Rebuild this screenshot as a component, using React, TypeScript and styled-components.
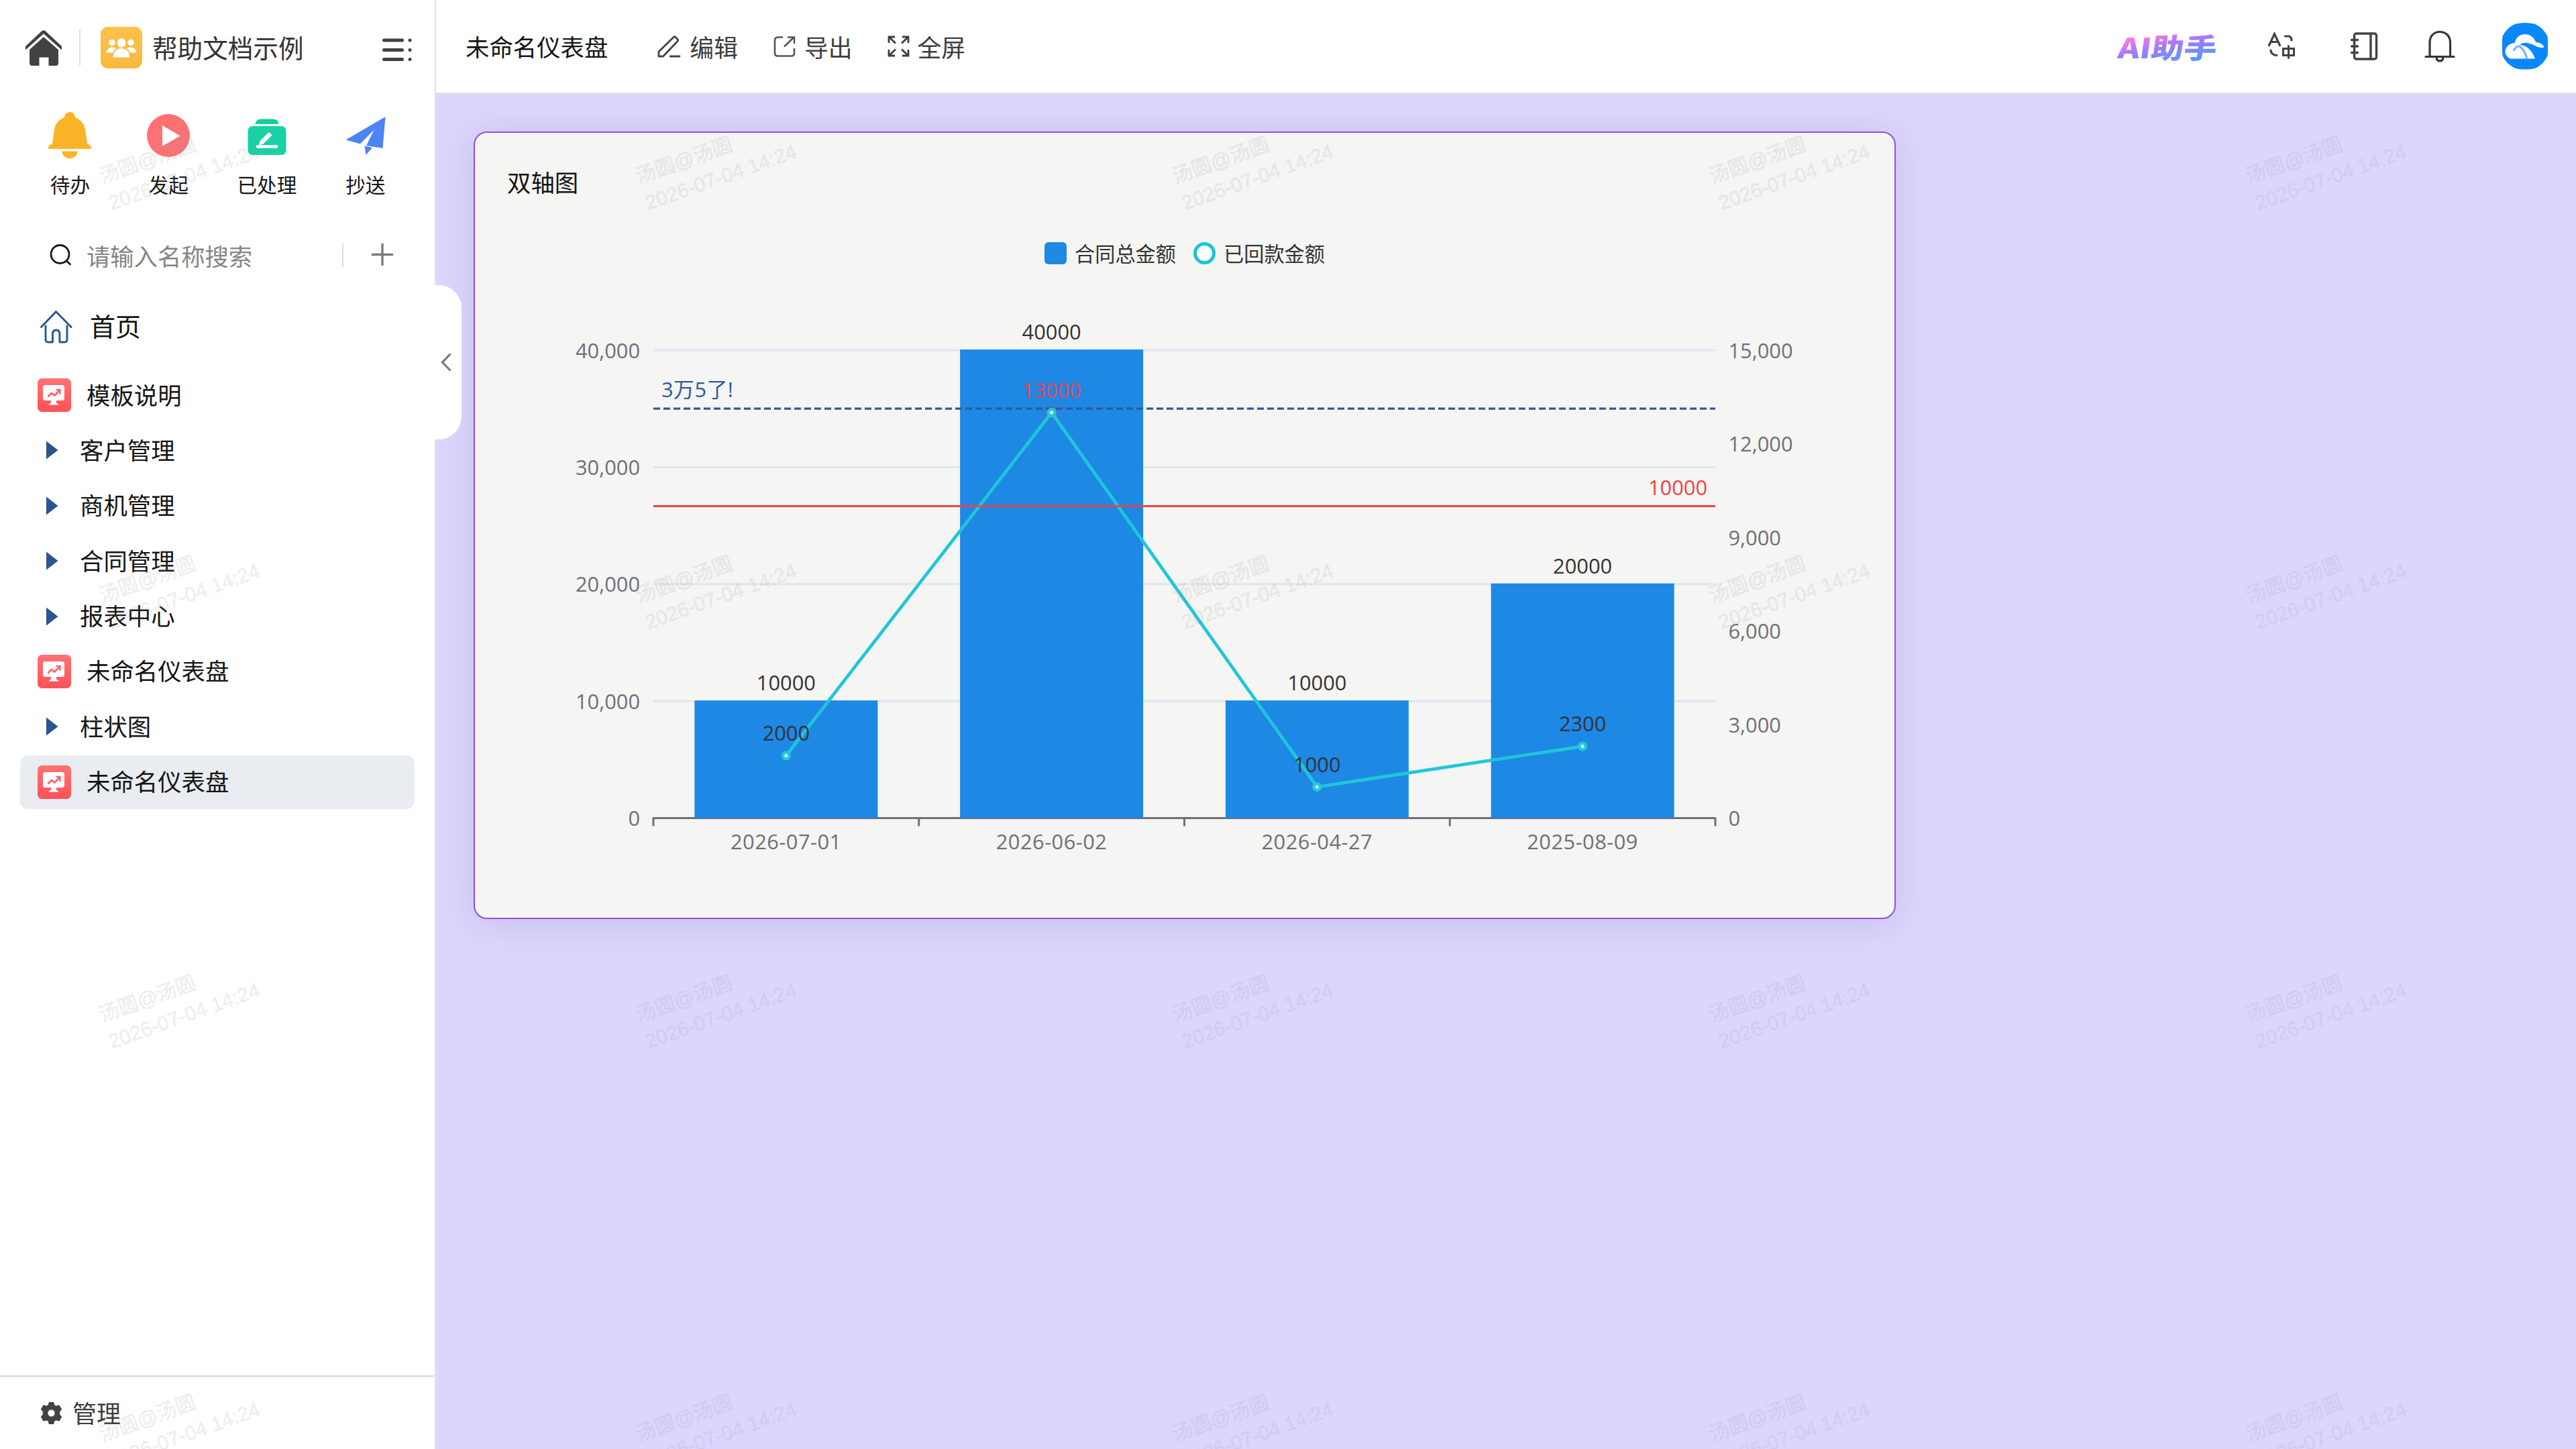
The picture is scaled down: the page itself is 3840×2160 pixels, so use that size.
import React from "react";
import styled, { createGlobalStyle } from "styled-components";

const CJK = `"Noto Sans CJK SC", "Noto Sans", sans-serif`;
const LATIN = `"Open Sans", "Noto Sans CJK SC", sans-serif`;

const GlobalStyle = createGlobalStyle`
  * { box-sizing: border-box; }
  html, body { margin: 0; padding: 0; }
  body { background: #dcd6ff; font-family: ${CJK}; color: #141414; overflow: hidden; }
  svg { display: block; flex: none; }
`;

const Page = styled.div`
  position: relative;
  display: flex;
  width: 3840px;
  height: 2160px;
  overflow: hidden;
  background: #dcd6ff;
`;

/* ---------- sidebar ---------- */

const Sidebar = styled.aside`
  flex: none;
  display: flex;
  flex-direction: column;
  width: 650px;
  height: 100%;
  background: #fff;
  border-right: 2px solid #e2e2e6;
`;

const SideHead = styled.header`
  display: flex;
  align-items: center;
  height: 142px;
  padding: 0 34px 0 38px;
`;

const Divider = styled.i<{ $h: number; $color?: string }>`
  flex: none;
  width: 2px;
  height: ${(p) => p.$h}px;
  background: ${(p) => p.$color ?? "#dedede"};
`;

const HeadDivider = styled(Divider)`
  margin: 0 30px 0 26px;
`;

const AppBadge = styled.span`
  display: flex;
  align-items: center;
  justify-content: center;
  width: 62px;
  height: 62px;
  border-radius: 11px;
  background: linear-gradient(#fec14a, #f7b840);
`;

const AppName = styled.span`
  margin: -3px 0 0 15px;
  font-size: 37.6px;
  line-height: 50px;
  color: #333;
  white-space: nowrap;
`;

const MenuButton = styled.span`
  margin: 8px 0 0 auto;
`;

const QuickActions = styled.nav`
  display: grid;
  grid-template-columns: repeat(4, 146.8px);
  height: 198px;
  padding: 23px 0 0 31px;
`;

const QuickAction = styled.a`
  display: flex;
  flex-direction: column;
  align-items: center;
`;

const QuickLabel = styled.span`
  margin-top: 16px;
  font-size: 29.6px;
  line-height: 40px;
  white-space: nowrap;
`;

const SearchRow = styled.div`
  display: flex;
  align-items: center;
  height: 80px;
  padding: 0 61px 0 74px;
`;

const Placeholder = styled.span`
  flex: 1;
  margin: 2px 0 0 22px;
  font-size: 35.3px;
  line-height: 50px;
  color: #858585;
  white-space: nowrap;
`;

const PlusSlot = styled.span`
  margin-left: 41px;
`;

const HomeRow = styled.a`
  display: flex;
  align-items: center;
  height: 80px;
  margin-top: 27px;
  padding-left: 60px;
  gap: 26px;
  font-size: 38px;
  line-height: 50px;
`;

const Tree = styled.ul`
  display: flex;
  flex-direction: column;
  gap: 2.4px;
  margin: 22px 30px 0;
  padding: 0;
  list-style: none;
`;

const TreeRow = styled.li<{ $folder?: boolean; $active?: boolean }>`
  display: flex;
  align-items: center;
  gap: ${(p) => (p.$folder ? 32 : 22)}px;
  height: 80px;
  padding-left: ${(p) => (p.$folder ? 39 : 26)}px;
  border-radius: 12px;
  background: ${(p) => (p.$active ? "#e9edf2" : "transparent")};
  font-size: 35.4px;
  line-height: 50px;
  white-space: nowrap;
`;

const RowText = styled.span<{ $lift: number }>`
  margin-top: ${(p) => -p.$lift}px;
`;

const SideFoot = styled.footer`
  display: flex;
  align-items: center;
  gap: 15px;
  height: 110px;
  margin-top: auto;
  padding-left: 60px;
  border-top: 3px solid #e0e0e0;
  font-size: 36px;
  line-height: 50px;
  color: #3c3c3c;
`;

/* Tab that hangs over the edge of the workspace and folds the sidebar */
const CollapseTab = styled.button`
  position: absolute;
  left: 647px;
  top: 425px;
  display: flex;
  align-items: center;
  width: 41px;
  height: 230px;
  padding: 0 0 0 9px;
  border: 0;
  border-radius: 0 34px 34px 0;
  background: #fff;
`;

/* ---------- workspace ---------- */

const Workspace = styled.div`
  flex: 1;
  display: flex;
  flex-direction: column;
  min-width: 0;
`;

const TopBar = styled.header`
  display: flex;
  align-items: center;
  flex: none;
  height: 140px;
  padding: 0 42px 0 44px;
  border-bottom: 2px solid #e2e2e6;
  background: #fff;
`;

const PageTitle = styled.h1`
  margin: 0 74px 0 0;
  font-size: 35.4px;
  font-weight: 400;
  line-height: 50px;
  white-space: nowrap;
`;

const ToolButton = styled.span<{ $after: number; $gap: number }>`
  display: flex;
  align-items: center;
  gap: ${(p) => p.$gap}px;
  margin-right: ${(p) => p.$after}px;
  font-size: 35.8px;
  line-height: 50px;
  color: #3d3d3d;
  white-space: nowrap;
`;

const TopRight = styled.div`
  display: flex;
  align-items: center;
  margin-left: auto;
`;

const Assistant = styled.span`
  width: 127px;
  margin-right: 95px;
  font-size: 41.5px;
  font-weight: 900;
  line-height: 54px;
  white-space: nowrap;
  transform: scaleX(1.18) skewX(-7deg);
  transform-origin: 0 50%;
  background: linear-gradient(165deg, #ff77dc 22%, #a07bff 48%, #5f95ff 80%);
  background-clip: text;
  -webkit-background-clip: text;
  color: transparent;
`;

const IconSlot = styled.span<{ $after: number }>`
  margin-right: ${(p) => p.$after}px;
`;

const Canvas = styled.main`
  flex: 1;
  padding: 56px;
`;

const Card = styled.section`
  display: flex;
  flex-direction: column;
  width: 2120px;
  height: 1174px;
  border: 2px solid #914fe3;
  border-radius: 20px;
  background: #f5f5f3;
  box-shadow: 0 6px 54px rgba(0, 0, 0, 0.11);
`;

const CardTitle = styled.h2`
  margin: 48px 0 0 48px;
  font-size: 35.4px;
  font-weight: 400;
  line-height: 50px;
`;

const Legend = styled.div`
  display: flex;
  justify-content: center;
  gap: 26px;
  height: 40px;
  margin: 61px 0 43px;
`;

const LegendItem = styled.span`
  display: flex;
  align-items: center;
  gap: 12px;
  font-size: 30.2px;
  line-height: 40px;
  color: #333;
`;

const Swatch = styled.i<{ $line?: boolean }>`
  width: 33px;
  height: 33px;
  border-radius: ${(p) => (p.$line ? "50%" : "6px")};
  border: ${(p) => (p.$line ? "5px solid #17c4d8" : "0")};
  background: ${(p) => (p.$line ? "#fff" : "#1e88e5")};
`;

const ChartSvg = styled.svg`
  font-family: ${LATIN};
  font-size: 30.8px;
`;

const DateLabel = styled.text`
  letter-spacing: 0.5px;
`;

/* ---------- watermark ---------- */

const WatermarkLayer = styled.div`
  position: absolute;
  left: 0;
  top: 140px;
  display: grid;
  grid-template-columns: repeat(5, 800px);
  grid-auto-rows: 625px;
  pointer-events: none;
`;

const Mark = styled.div`
  display: flex;
  padding: 62px 0 0 149px;
`;

const MarkText = styled.div`
  width: 240px;
  height: 84px;
  font: 30px/42px "Liberation Sans", "Noto Sans CJK SC", sans-serif;
  color: rgba(150, 150, 150, 0.15);
  -webkit-text-stroke: 1px rgba(150, 150, 150, 0.1);
  white-space: pre;
  transform: rotate(-19.5deg);
`;

/* ---------- icons ---------- */

const HouseSolid = () => (
  <svg width="54" height="54" viewBox="0 0 54 54">
    <path d="M0 25 24 2.500a4.500 4.500 0 0 1 6 0L54 25v6.500L27 6.500 0 31.500z" fill="#424242" />
    <path d="M6 30 27 11l22 19v20a4 4 0 0 1-4 4H34.500V41.500H20.500V54H10a4 4 0 0 1-4-4z" fill="#424242" />
    <path d="M0 32.500 27 8.500 54 32.500" fill="none" stroke="#fff" strokeWidth="3" />
  </svg>
);

const People = () => (
  <svg width="46" height="29" viewBox="0 0 46 29" fill="#fff">
    <circle cx="9" cy="6.500" r="4.800" />
    <circle cx="37" cy="6.500" r="4.800" />
    <ellipse cx="23" cy="7" rx="6.300" ry="6.800" />
    <path d="M.5 21.500c.5-5 4-8 8.500-8 2.500 0 4.500.5 6 2-2.500 1.500-4 3.500-4.500 6z" />
    <path d="M45.500 21.500c-.5-5-4-8-8.500-8-2.500 0-4.500.5-6 2 2.500 1.500 4 3.500 4.500 6z" />
    <path d="M10.500 28.500c.5-8.500 5-13.500 12.500-13.500s12 5 12.500 13.500z" />
  </svg>
);

const MenuIcon = () => (
  <svg width="44" height="42" viewBox="0 0 44 42" stroke="#424242" strokeWidth="5" strokeLinecap="round">
    <path d="M2.500 6h27M2.500 20.500h27M2.500 34.500h27M41 6h.1M41 20.500h.1M41 34.500h.1" />
  </svg>
);

const BellSolid = () => (
  <svg width="72" height="74" viewBox="0 0 72 74" fill="#fbb42a">
    <path d="M28 10a8 8 0 0 1 16 0c9 3 14.500 11 15.500 21l2.500 18c4 2 6 3.500 6 6.500q0 1.500-1.500 1.500h-61Q4 57 4 55.500c0-3 2-4.500 6-6.500l2.500-18C13.500 21 19 13 28 10z" />
    <path d="M24.500 60.500h23a11.500 10.500 0 0 1-23 0z" />
  </svg>
);

const PlaySolid = () => (
  <svg width="72" height="74" viewBox="0 0 72 74">
    <circle cx="36" cy="37" r="32" fill="#fd7175" />
    <path d="M27 22v31l26.500-15.500z" fill="#fff" />
  </svg>
);

const DoneSolid = () => (
  <svg width="72" height="74" viewBox="0 0 72 74">
    <path d="M18.500 20q1-7.500 8-7.500h19q7 0 8 7.500z" fill="#12cd9c" />
    <rect x="7.500" y="23" width="57" height="43" rx="7" fill="#1ad1a4" />
    <path d="M24 51.500l2-7L39 32l4.500 4.500-13 13z" fill="#fff" />
    <path d="M22 53.500h28" stroke="#fff" strokeWidth="4.500" strokeLinecap="round" />
  </svg>
);

const PlaneSolid = () => (
  <svg width="72" height="74" viewBox="0 0 72 74" fill="#4c83f5">
    <path d="M65.500 9 6.500 43.500 28 49.500 49 28 37 52l24.500 4z" />
    <path d="M34.500 52.500 46 55 36.500 66z" />
  </svg>
);

const SearchIcon = () => (
  <svg width="33" height="34" viewBox="0 0 33 34" fill="none" stroke="#1a1a1a" strokeWidth="2.800" strokeLinecap="round">
    <circle cx="15.500" cy="16" r="13.500" />
    <path d="M26 26.500l4.500 4.500" />
  </svg>
);

const PlusIcon = () => (
  <svg width="34" height="34" viewBox="0 0 34 34" stroke="#7b7b7b" strokeWidth="3.400">
    <path d="M17 0v33M1 16.500h32" />
  </svg>
);

const HouseLine = () => (
  <svg width="48" height="50" viewBox="0 0 48 50" fill="none" stroke="#2a5590" strokeWidth="2.900" strokeLinecap="round" strokeLinejoin="round">
    <path d="M1.500 25.500 23.500 2.500 46 25.500" />
    <path d="M8 24v20q0 4 4 4h6.500V36q0-6 5.200-6t5.200 6v12H36q4 0 4-4V24" />
  </svg>
);

const DashboardIcon = () => (
  <svg width="51" height="50" viewBox="0 0 51 50">
    <defs>
      <linearGradient id="dash" x1="0" y1="0" x2="0" y2="1">
        <stop offset="0" stopColor="#ff7274" />
        <stop offset="1" stopColor="#fb5258" />
      </linearGradient>
    </defs>
    <rect width="50" height="50" rx="6.500" fill="url(#dash)" />
    <path d="M11.500 10h25q3.500 0 3.500 3.500v16q0 3.500-3.500 3.500H28v3.500l4 3H16l4-3V33h-8.500Q8 33 8 29.500v-16Q8 10 11.500 10z" fill="#fff" />
    <path d="M15.500 27.500l5-5.500 5 3.500 7-7.500" fill="none" stroke="#fd6468" strokeWidth="2.800" />
    <path d="M27.500 17h6v7" fill="none" stroke="#fd6468" strokeWidth="2.400" />
  </svg>
);

const Caret = () => (
  <svg width="18" height="28" viewBox="0 0 18 28" fill="#2b558f">
    <path d="M0 .5 17.500 14 0 27.500z" />
  </svg>
);

const Gear = () => (
  <svg width="33" height="33" viewBox="0 0 24 24" fill="#424242">
    <path
      fillRule="evenodd"
      d="M9.700 0h4.600l.9 3.200 2 1.200 3.300-.9 2.600 4.400L21 10.400v3.200l2.100 2.500-2.600 4.400-3.300-.9-2 1.200-.9 3.200H9.700l-.9-3.200-2-1.200-3.300.9-2.600-4.400L3 13.600v-3.200L.9 7.900l2.600-4.400 3.300.9 2-1.200zM12 8a4 4 0 1 0 0 8 4 4 0 0 0 0-8z"
      stroke="#424242"
      strokeWidth=".6"
      strokeLinejoin="round"
    />
  </svg>
);

const ChevronLeft = () => (
  <svg width="18" height="28" viewBox="0 0 18 28" fill="none" stroke="#7a7a7a" strokeWidth="3.200">
    <path d="M15.500 1.500 3.500 14l12 12.500" />
  </svg>
);

const PencilIcon = () => (
  <svg width="35" height="33" viewBox="0 0 35 33" fill="none" stroke="#444" strokeWidth="2.800" strokeLinejoin="round" strokeLinecap="round">
    <path d="M2 31v-7L24 2.500q1.500-1.500 3 0l3 3q1.500 1.500 0 3L8.500 31z" />
    <path d="M19 31h14" />
  </svg>
);

const ExportIcon = () => (
  <svg width="34" height="33" viewBox="0 0 34 33" fill="none" stroke="#555" strokeWidth="2.600">
    <path d="M14 2.500H6.500q-4.500 0-4.500 4.500v19q0 4.500 4.500 4.500h20q4.500 0 4.500-4.500V19" />
    <path d="M16 16.500 30.500 2.500M21 2.500h10v9.500" />
  </svg>
);

const FullscreenIcon = () => (
  <svg width="33" height="32" viewBox="0 0 33 32" fill="none" stroke="#3d3d3d" strokeWidth="2.800">
    <path d="M2 11V2h9M22 2h9v9M31 21v9h-9M11 30H2v-9" />
    <path d="M2 2l10 9.500M31 2 21 11.500M31 30l-10-9.500M2 30l10-9.500" />
  </svg>
);

const TranslateIcon = () => (
  <svg width="42" height="42" viewBox="0 0 42 42" fill="none" stroke="#424242" strokeWidth="3.200" strokeLinecap="round">
    <path d="M2.500 19.500 10.500 2.500l8 17M5.500 14.500h10" />
    <path d="M26.500 6h5q4 0 4.500 6" />
    <path d="M5 27q.5 7 9 7.500" />
    <path d="M23.500 24.500h16v10h-16zM31.500 20.500v18" strokeWidth="3" />
  </svg>
);

const NotebookIcon = () => (
  <svg width="42" height="44" viewBox="0 0 42 44" fill="none" stroke="#424242" strokeWidth="3.400" strokeLinecap="round">
    <rect x="6.500" y="3" width="33" height="38" rx="3" />
    <path d="M31 3v38M2.500 12.500h9M2.500 22h9M2.500 31.500h9" />
  </svg>
);

const BellLine = () => (
  <svg width="46" height="48" viewBox="0 0 46 48" fill="none" stroke="#363636" strokeWidth="3.200" strokeLinecap="round">
    <path d="M2 39.500h42" />
    <path d="M8 39V18.500C8 8.500 14 2.500 23 2.500s15.500 6 15.500 16V39" />
    <path d="M18 40.500q.5 5.500 5 5.500t5-5.500" />
  </svg>
);

const Avatar = () => (
  <svg width="68" height="70" viewBox="0 0 68 70">
    <path d="M20 1.500Q34-1.500 48 1.500 61 7 67.500 20q1.500 15 0 29Q62 62 49 68q-15 3-29 0Q6 62 .5 49-.8 35 .5 20 7 7 20 1.500z" fill="#0a87fb" />
    <path d="M12 53.500C-1 47 4 31 18.500 30 21 20 28 16.500 35 17c8 .5 13 6 15 12 5 0 11 2.500 12.500 7.500-9 2-13-3-21-5.500-7-2-13-1.500-15 2.500 6 0 10 2 13 5 4 4 7.500 9 9.500 15z" fill="#fff" />
    <path d="M17 42c1-4 4-6 8-7.500 6 4 10 11 12 19" fill="none" stroke="#6db8ff" strokeWidth="3" />
  </svg>
);

/* ---------- chart ---------- */

const ROWS = [
  { date: "2026-07-01", total: 10000, paid: 2000 },
  { date: "2026-06-02", total: 40000, paid: 13000 },
  { date: "2026-04-27", total: 10000, paid: 1000 },
  { date: "2025-08-09", total: 20000, paid: 2300 },
];

const PLOT = { left: 266, right: 1849, top: 82, bottom: 779.5 };
const BAND = (PLOT.right - PLOT.left) / ROWS.length;
const BAR_WIDTH = 273;
const yTotal = (v: number) => PLOT.bottom - ((PLOT.bottom - PLOT.top) * v) / 40000;
const yPaid = (v: number) => PLOT.bottom - ((PLOT.bottom - PLOT.top) * v) / 15000;
const xMid = (i: number) => PLOT.left + BAND * (i + 0.5);

const DualAxisChart = () => (
  <ChartSvg width="2116" height="880" viewBox="0 0 2116 880">
    {[10000, 20000, 30000, 40000].map((v) => (
      <path key={v} d={`M${PLOT.left} ${yTotal(v)}H${PLOT.right}`} stroke="#e0e6f1" strokeWidth="3" />
    ))}
    <g fill="#6e7079" textAnchor="end">
      {[0, 10000, 20000, 30000, 40000].map((v) => (
        <text key={v} x={PLOT.left - 20} y={yTotal(v) + 11.5}>
          {v.toLocaleString("en-US")}
        </text>
      ))}
    </g>
    <g fill="#6e7079">
      {[0, 3000, 6000, 9000, 12000, 15000].map((v) => (
        <text key={v} x={PLOT.right + 19.5} y={yPaid(v) + 11.5}>
          {v.toLocaleString("en-US")}
        </text>
      ))}
    </g>
    <path
      d={`M${PLOT.left} ${PLOT.bottom}H${PLOT.right}` + [0, 1, 2, 3, 4].map((i) => `M${PLOT.left + BAND * i} ${PLOT.bottom - 1}v13`).join("")}
      stroke="#6e7079"
      strokeWidth="3"
    />
    {ROWS.map((r, i) => (
      <rect key={r.date} x={xMid(i) - BAR_WIDTH / 2} y={yTotal(r.total) - 1} width={BAR_WIDTH} height={PLOT.bottom - yTotal(r.total) + 1} fill="#1e88e5" />
    ))}
    <rect x={xMid(1) - 15} y={yPaid(13000) - 15} width="30" height="30" fill="#2d82da" />
    <polyline points={ROWS.map((r, i) => `${xMid(i)},${yPaid(r.paid)}`).join(" ")} fill="none" stroke="#1fc6d9" strokeWidth="4.800" strokeLinejoin="bevel" />
    <path d={`M${PLOT.left} ${yTotal(35000)}H${PLOT.right}`} stroke="#2f5a97" strokeWidth="3.200" strokeDasharray="10 5" />
    <path d={`M${PLOT.left} ${yPaid(10000)}H${PLOT.right}`} stroke="#ec4445" strokeWidth="3.200" />
    {ROWS.map((r, i) => (
      <circle key={r.date} cx={xMid(i)} cy={yPaid(r.paid)} r="4.800" fill="#fff" stroke="#22c9dc" strokeWidth="4.600" />
    ))}
    <g textAnchor="middle" fill="#333">
      {ROWS.map((r, i) => (
        <React.Fragment key={r.date}>
          <DateLabel x={xMid(i)} y={PLOT.bottom + 46} fill="#6e7079">
            {r.date}
          </DateLabel>
          <text x={xMid(i)} y={yTotal(r.total) - 16}>
            {r.total}
          </text>
          <text x={xMid(i)} y={yPaid(r.paid) - 22.5} fill={r.paid > 10000 ? "#ee4350" : "#333"}>
            {r.paid}
          </text>
        </React.Fragment>
      ))}
    </g>
    <text x={PLOT.left + 12} y={yTotal(35000) - 17.5} fill="#2f5a97" letterSpacing="0.5">
      3万5了!
    </text>
    <text x={PLOT.right - 12} y={yPaid(10000) - 16.5} fill="#ec4445" textAnchor="end">
      10000
    </text>
  </ChartSvg>
);

/* ---------- page ---------- */

const QUICK = [
  { label: "待办", Icon: BellSolid },
  { label: "发起", Icon: PlaySolid },
  { label: "已处理", Icon: DoneSolid },
  { label: "抄送", Icon: PlaneSolid },
];

const TREE: { label: string; folder?: boolean; active?: boolean }[] = [
  { label: "模板说明" },
  { label: "客户管理", folder: true },
  { label: "商机管理", folder: true },
  { label: "合同管理", folder: true },
  { label: "报表中心", folder: true },
  { label: "未命名仪表盘" },
  { label: "柱状图", folder: true },
  { label: "未命名仪表盘", active: true },
];

export default function App() {
  return (
    <Page>
      <GlobalStyle />
      <Sidebar>
        <SideHead>
          <HouseSolid />
          <HeadDivider $h={54} />
          <AppBadge>
            <People />
          </AppBadge>
          <AppName>帮助文档示例</AppName>
          <MenuButton>
            <MenuIcon />
          </MenuButton>
        </SideHead>
        <QuickActions>
          {QUICK.map(({ label, Icon }) => (
            <QuickAction key={label}>
              <Icon />
              <QuickLabel>{label}</QuickLabel>
            </QuickAction>
          ))}
        </QuickActions>
        <SearchRow>
          <SearchIcon />
          <Placeholder>请输入名称搜索</Placeholder>
          <Divider $h={36} $color="#dcdfe6" />
          <PlusSlot>
            <PlusIcon />
          </PlusSlot>
        </SearchRow>
        <HomeRow>
          <HouseLine />
          <RowText $lift={5}>首页</RowText>
        </HomeRow>
        <Tree>
          {TREE.map((item, i) => (
            <TreeRow key={i} $folder={item.folder} $active={item.active}>
              {item.folder ? <Caret /> : <DashboardIcon />}
              <RowText $lift={3}>{item.label}</RowText>
            </TreeRow>
          ))}
        </Tree>
        <SideFoot>
          <Gear />
          <RowText $lift={4}>管理</RowText>
        </SideFoot>
      </Sidebar>

      <Workspace>
        <TopBar>
          <PageTitle>未命名仪表盘</PageTitle>
          <ToolButton $gap={13} $after={53}>
            <PencilIcon />
            编辑
          </ToolButton>
          <ToolButton $gap={12} $after={52}>
            <ExportIcon />
            导出
          </ToolButton>
          <ToolButton $gap={12} $after={0}>
            <FullscreenIcon />
            全屏
          </ToolButton>
          <TopRight>
            <Assistant>AI助手</Assistant>
            <IconSlot $after={81}>
              <TranslateIcon />
            </IconSlot>
            <IconSlot $after={69}>
              <NotebookIcon />
            </IconSlot>
            <IconSlot $after={70}>
              <BellLine />
            </IconSlot>
            <Avatar />
          </TopRight>
        </TopBar>
        <Canvas>
          <Card>
            <CardTitle>双轴图</CardTitle>
            <Legend>
              <LegendItem>
                <Swatch />
                合同总金额
              </LegendItem>
              <LegendItem>
                <Swatch $line />
                已回款金额
              </LegendItem>
            </Legend>
            <DualAxisChart />
          </Card>
        </Canvas>
      </Workspace>

      <CollapseTab>
        <ChevronLeft />
      </CollapseTab>

      <WatermarkLayer>
        {Array.from({ length: 20 }, (_, i) => (
          <Mark key={i}>
            <MarkText>{"汤圆@汤圆\n2026-07-04 14:24"}</MarkText>
          </Mark>
        ))}
      </WatermarkLayer>
    </Page>
  );
}
